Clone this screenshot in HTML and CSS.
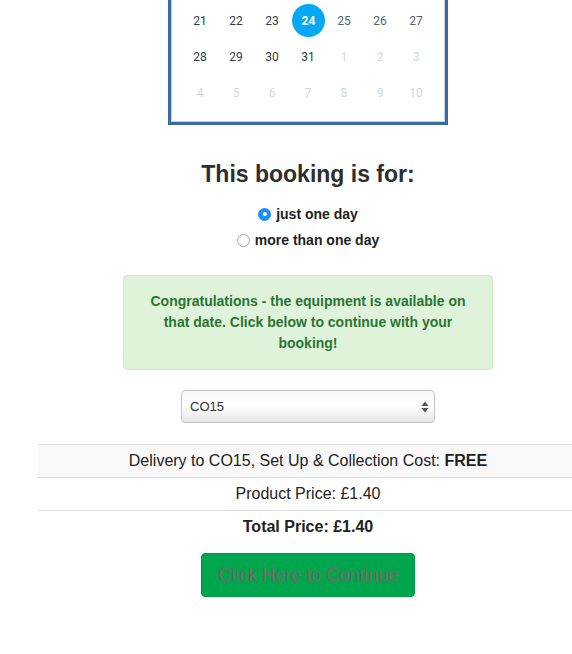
FILE: index.html
```html
<!DOCTYPE html>
<html>
<head>
<meta charset="utf-8">
<link rel="stylesheet" href="styles.css">
</head>
<body>
<div class="page">
  <div class="calendar">
    <div class="calendar-inner">
      <div class="week">
        <span class="day">21</span><span class="day">22</span><span class="day">23</span><span class="day selected">24</span><span class="day weekend">25</span><span class="day weekend">26</span><span class="day weekend">27</span>
      </div>
      <div class="week">
        <span class="day">28</span><span class="day">29</span><span class="day">30</span><span class="day">31</span><span class="day other">1</span><span class="day other">2</span><span class="day other">3</span>
      </div>
      <div class="week">
        <span class="day other">4</span><span class="day other">5</span><span class="day other">6</span><span class="day other">7</span><span class="day other">8</span><span class="day other">9</span><span class="day other">10</span>
      </div>
    </div>
  </div>

  <h1 class="title">This booking is for:</h1>

  <div class="options">
    <label class="option"><span class="radio checked"></span><span>just one day</span></label>
    <label class="option"><span class="radio"></span><span>more than one day</span></label>
  </div>

  <div class="alert">Congratulations - the equipment is available on that date. Click below to continue with your booking!</div>

  <div class="select-wrap">
    <div class="select">CO15</div>
    <svg class="select-arrows" width="8" height="12" viewBox="0 0 8 12"><path d="M4 0.5 L7.5 5 L0.5 5 Z M4 11.5 L7.5 7 L0.5 7 Z" fill="#555"/></svg>
  </div>

  <div class="prices">
    <div class="price-row striped">Delivery to CO15, Set Up &amp; Collection Cost: <b>FREE</b></div>
    <div class="price-row">Product Price: £1.40</div>
    <div class="price-row total"><b>Total Price: £1.40</b></div>
  </div>

  <div class="actions">
    <button class="continue">Click Here to Continue</button>
  </div>
</div>
</body>
</html>
```

FILE: styles.css
```css
html, body {
  margin: 0;
  padding: 0;
  overflow: hidden;
  background: #fff;
}
body {
  font-family: "Liberation Sans", Arial, sans-serif;
  color: #333;
  font-size: 14px;
}
.page {
  margin-left: 38px;
  width: 540px;
  text-align: center;
}
.calendar {
  width: 280px;
  margin: 0 auto;
  border: 3px solid #376a9d;
  border-top: 0;
  box-sizing: border-box;
}
.calendar-inner {
  border: 1px solid #c9ced3;
  border-top: 0;
  padding: 3px 10px 10px;
}
.week {
  display: grid;
  grid-template-columns: repeat(7, 36px);
  height: 36px;
}
.day {
  display: flex;
  align-items: center;
  justify-content: center;
  font-family: Roboto, "Liberation Sans", sans-serif;
  font-size: 12px;
  color: #353d44;
}
.day.weekend {
  color: #56626b;
}
.day.other {
  color: #d3d7da;
}
.day.selected {
  background: #03a9f4;
  color: #fff;
  font-weight: bold;
  border-radius: 50%;
  width: 33px;
  height: 33px;
  margin: 1px 0 0 2px;
}
.title {
  margin: 35px 0 0;
  font-size: 23px;
  line-height: 28px;
  font-weight: bold;
  color: #2e2e2e;
}
.options {
  margin-top: 13px;
  display: flex;
  flex-direction: column;
  align-items: center;
}
.option {
  display: flex;
  align-items: center;
  gap: 5px;
  height: 26px;
  font-size: 14px;
  font-weight: bold;
  color: #222;
}
.radio {
  width: 13px;
  height: 13px;
  border-radius: 50%;
  border: 1px solid #a9a9a9;
  background: #fff;
  box-sizing: border-box;
  position: relative;
}
.radio.checked {
  border-color: #1d8ef5;
  background: #1f8ff7;
}
.radio.checked::after {
  content: "";
  position: absolute;
  left: 3.5px;
  top: 3.5px;
  width: 4px;
  height: 4px;
  border-radius: 50%;
  background: #fff;
}
.alert {
  width: 370px;
  box-sizing: border-box;
  margin: 22px auto 0;
  padding: 15px 22px;
  background: #dff3da;
  border: 1px solid #cfebc6;
  border-radius: 4px;
  color: #2a7534;
  font-weight: bold;
  font-size: 14px;
  line-height: 21px;
}
.select-wrap {
  width: 254px;
  margin: 20px auto 0;
  position: relative;
}
.select {
  height: 33px;
  box-sizing: border-box;
  border: 1px solid #c3c3c3;
  border-radius: 4px;
  background: linear-gradient(#f6f6f6, #ffffff 45%, #e7e7e7);
  text-align: left;
  padding-left: 8px;
  font-size: 13px;
  line-height: 31px;
  color: #333;
}
.select-arrows {
  position: absolute;
  right: 6px;
  top: 11px;
}
.prices {
  margin-top: 21px;
}
.price-row {
  border-top: 1px solid #dddddd;
  padding: 8px;
  line-height: 16px;
  font-size: 16px;
  color: #222;
}
.price-row.striped {
  background: #f9f9f9;
}
.actions {
  margin-top: 10px;
}
.continue {
  width: 214px;
  height: 44px;
  background: #00a64d;
  border: 1px solid #009a44;
  border-radius: 4px;
  color: #7d6565;
  font-family: "Liberation Sans", Arial, sans-serif;
  font-size: 18px;
  padding: 0;
  cursor: pointer;
}
```
